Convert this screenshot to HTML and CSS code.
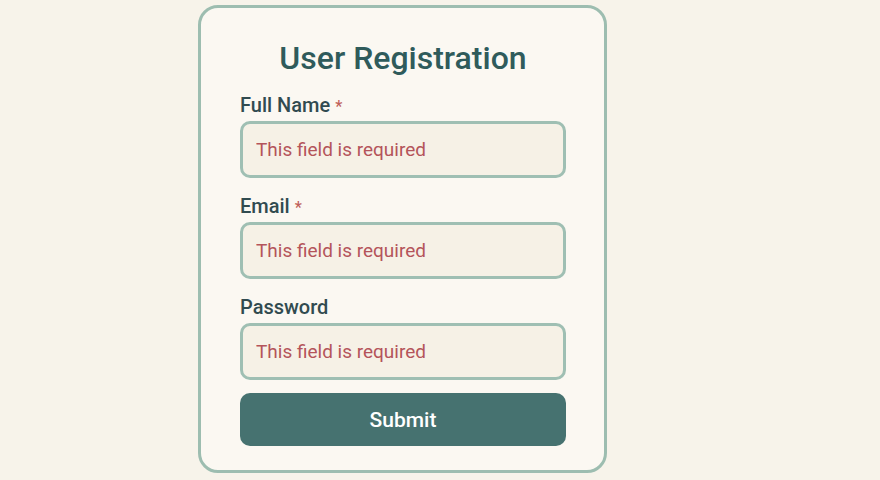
FILE: index.html
```html
<!DOCTYPE html>
<html lang="en">
<head>
    <meta charset="UTF-8">
    <meta name="viewport" content="width=device-width, initial-scale=1.0">
    <title>User Registration</title>
    <link rel="stylesheet" href="styles.css">
</head>
<body>

    <div class="card">
        <h1 class="title">User Registration</h1>

        <form class="form" onsubmit="return false;">
            <div class="field">
                <label for="fullName">Full Name <span class="req">*</span></label>
                <input id="fullName" type="text" placeholder="This field is required">
            </div>

            <div class="field">
                <label for="email">Email <span class="req">*</span></label>
                <input id="email" type="email" placeholder="This field is required">
            </div>

            <div class="field">
                <label for="password">Password</label>
                <input id="password" type="password" placeholder="This field is required">
            </div>

            <button type="submit" class="btn">Submit</button>
        </form>
    </div>

</body>
</html>
```

FILE: styles.css
```css
body {
    font-family: Roboto, "Noto Sans", sans-serif;
    background-color: #f7f3ea;
    margin: 0;
    padding: 0;
    color: #2f4f4f;
}
.card {
    box-sizing: border-box;
    width: 409px;
    height: 468px;
    margin: 5px 0 0 198px;
    padding: 30px 38px 0 39px;
    background-color: #fbf8f2;
    border: 3px solid #9dbdb0;
    border-radius: 20px;
}
.title {
    margin: 0 0 15px 0;
    text-align: center;
    font-size: 32px;
    line-height: 40px;
    font-weight: 500;
    color: #2f5b5b;
}
.form {
    display: flex;
    flex-direction: column;
}
.field {
    display: flex;
    flex-direction: column;
    margin-bottom: 16px;
}
.field:last-of-type {
    margin-bottom: 13px;
}
.field label {
    font-size: 20px;
    line-height: 24px;
    font-weight: 500;
    color: #314b50;
    margin-bottom: 4px;
}
.req {
    color: #c0605a;
    font-size: 16px;
    line-height: 1;
}
.field input {
    box-sizing: border-box;
    height: 57px;
    padding: 0 13px;
    font-family: inherit;
    font-size: 19px;
    background-color: #f6f1e6;
    border: 3px solid #9fbfb3;
    border-radius: 10px;
    outline: none;
}
.field input::placeholder {
    color: #b4545a;
}
.btn {
    height: 53px;
    font-family: inherit;
    font-size: 21px;
    font-weight: 500;
    color: #fff;
    background-color: #467270;
    border: none;
    border-radius: 10px;
}
```
